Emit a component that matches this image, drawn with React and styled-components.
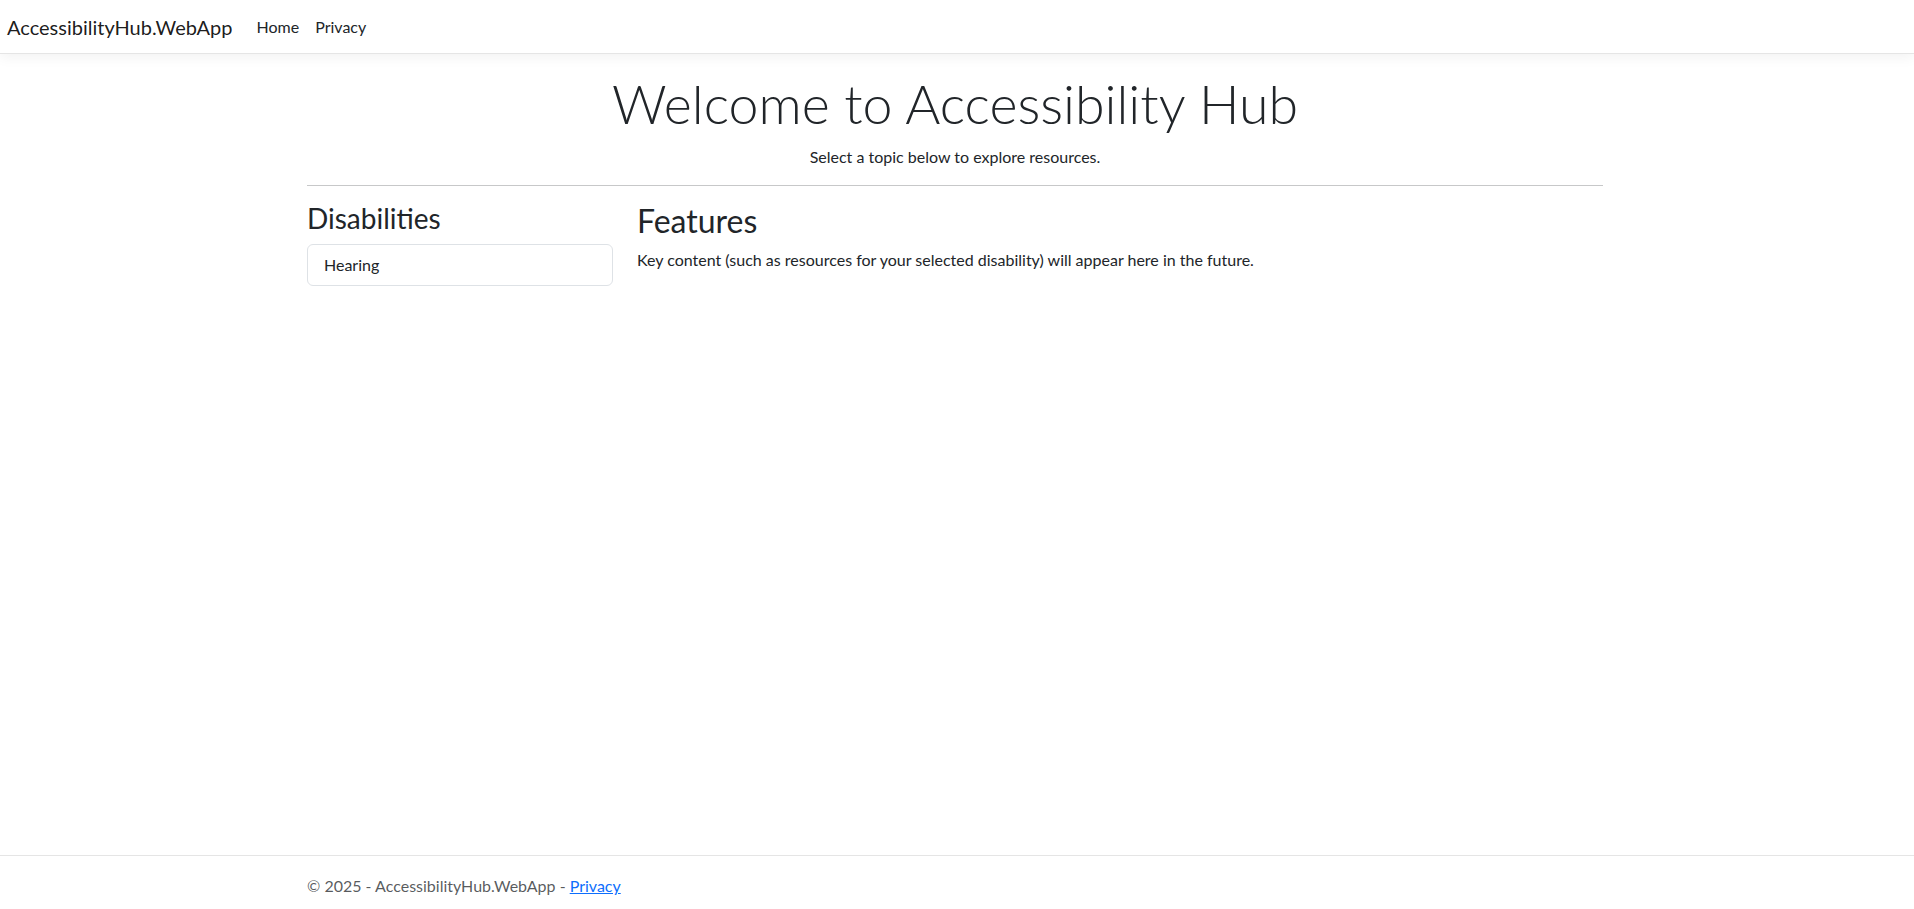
import React from "react";
import styled, { createGlobalStyle } from "styled-components";

const GlobalStyle = createGlobalStyle`
  html, body {
    margin: 0;
    padding: 0;
    background: #fff;
  }
  body {
    font-family: "Lato", "Open Sans", sans-serif;
    font-size: 16px;
    line-height: 1.5;
    color: #212529;
  }
  * {
    box-sizing: border-box;
  }
`;

const PageWrapper = styled('div')`
  display: flex;
  flex-direction: column;
  min-height: 100vh;
`;

const NavWrapper = styled('header')`
  display: flex;
  align-items: center;
  height: 54px;
  padding: 0 7px;
  background-color: #fff;
  border-bottom: 1px solid #e5e5e5;
  box-shadow: 0 4px 12px rgba(0, 0, 0, 0.05);
`;

const Brand = styled('a')`
  font-size: 20px;
  line-height: 30px;
  color: rgba(0, 0, 0, 0.9);
  text-decoration: none;
  margin-right: 16px;
`;

const NavList = styled('nav')`
  display: flex;
`;

const NavLink = styled('a')`
  padding: 8px;
  font-size: 16px;
  color: #212529;
  text-decoration: none;
`;

const MainWrapper = styled('main')`
  flex: 1;
  margin-top: 16px;
`;

const Container = styled('div')`
  width: 100%;
  max-width: 1320px;
  margin: 0 auto;
  padding: 0 14px 0 10px;
`;

const Hero = styled('div')`
  text-align: center;
`;

const Title = styled('h1')`
  font-size: 53.7px;
  font-weight: 300;
  line-height: 67px;
  margin: 0 0 8px;
`;

const Lead = styled('p')`
  margin: 0 0 16px;
`;

const Divider = styled('hr')`
  margin: 16px 0;
  border: 0;
  border-top: 1px solid #212529;
  opacity: 0.25;
`;

const Row = styled('div')`
  display: grid;
  grid-template-columns: calc(25% - 18px) 1fr;
  column-gap: 24px;
`;

const SideTitle = styled('h3')`
  font-size: 28px;
  font-weight: 400;
  line-height: 1.2;
  margin: 0 0 8px;
`;

const ListGroup = styled('div')`
  display: flex;
  flex-direction: column;
  border: 1px solid #dee2e6;
  border-radius: 6px;
`;

const ListItem = styled('a')`
  padding: 8px 16px;
  line-height: 24px;
  color: #212529;
  text-decoration: none;
  cursor: pointer;
`;

const SectionTitle = styled('h2')`
  font-size: 32px;
  font-weight: 400;
  line-height: 1.2;
  margin: 0 0 8px;
`;

const Text = styled('p')`
  margin: 0;
`;

const FooterWrapper = styled('footer')`
  height: 54px;
  overflow: hidden;
  border-top: 1px solid #e5e5e5;
  line-height: 60px;
  white-space: nowrap;
  color: rgba(33, 37, 41, 0.75);
`;

const FooterLink = styled('a')`
  color: #0d6efd;
  text-decoration: underline;
`;

const disabilities = ["Hearing"];

const App = () => {
    return (
      <PageWrapper>
          <GlobalStyle />
          <NavWrapper>
              <Brand href="#">AccessibilityHub.WebApp</Brand>
              <NavList>
                  <NavLink href="#">Home</NavLink>
                  <NavLink href="#">Privacy</NavLink>
              </NavList>
          </NavWrapper>
          <MainWrapper>
              <Container>
                  <Hero>
                      <Title>Welcome to Accessibility Hub</Title>
                      <Lead>Select a topic below to explore resources.</Lead>
                  </Hero>
                  <Divider />
                  <Row>
                      <div>
                          <SideTitle>Disabilities</SideTitle>
                          <ListGroup>
                              {disabilities.map(item => (
                                <ListItem key={item}>{item}</ListItem>
                              ))}
                          </ListGroup>
                      </div>
                      <div>
                          <SectionTitle>Features</SectionTitle>
                          <Text>Key content (such as resources for your selected disability) will appear here in the future.</Text>
                      </div>
                  </Row>
              </Container>
          </MainWrapper>
          <FooterWrapper>
              <Container>
                  &copy; 2025 - AccessibilityHub.WebApp - <FooterLink href="#">Privacy</FooterLink>
              </Container>
          </FooterWrapper>
      </PageWrapper>
    );
};

export default App;
